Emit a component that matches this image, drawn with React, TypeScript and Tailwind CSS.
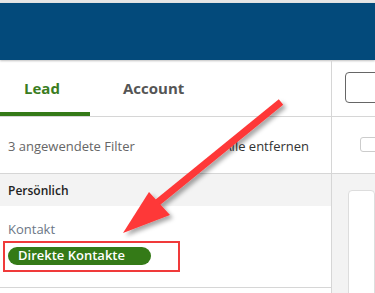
import React from 'react';

const App: React.FC = () => {
  return (
    <div className="relative w-[375px] h-[293px] overflow-hidden bg-white font-['Open_Sans','Noto_Sans',sans-serif]">
      <div className="h-[3px] bg-[#e6e6e6]"></div>
      <div className="h-[57px] bg-[#034a7b] shadow-[0_1px_2px_rgba(0,0,0,0.25)]"></div>

      {/* tabs */}
      <div className="grid grid-cols-[332px_1fr] h-[57px] border-b border-[#d6d6d6]">
        <div className="flex border-r border-[#d6d6d6]">
          <div className="w-[90px] flex flex-col">
            <div className="flex-1 flex items-center pt-[5px] pl-[24px] text-[15px] font-bold text-[#3a7d1e]">Lead</div>
            <div className="h-[4px] bg-[#347a17]"></div>
          </div>
          <div className="flex items-center pl-[33px] pt-[1px] text-[15px] font-bold text-[#555]">Account</div>
        </div>
        <div className="pl-[13px] pt-[12px]">
          <div className="w-[40px] h-[31px] border border-[#666] rounded-[4px]"></div>
        </div>
      </div>

      {/* filter row */}
      <div className="grid grid-cols-[332px_1fr] h-[57px] border-b border-[#d6d6d6]">
        <div className="flex items-center justify-between pt-[3px] pl-[8px] pr-[22px] border-r border-[#d6d6d6]">
          <span className="text-[13px] text-[#666]">3 angewendete Filter</span>
          <span className="text-[13px] text-[#333]">Alle entfernen</span>
        </div>
        <div className="pl-[28px] pt-[20px]">
          <div className="w-[20px] h-[15px] border border-[#ccc] rounded-[3px]"></div>
        </div>
      </div>

      <div className="grid grid-cols-[332px_1fr] h-[120px]">
        <div className="border-r border-[#d6d6d6] flex flex-col">
          <div className="h-[32px] bg-[#f3f3f3] flex items-center pt-[2px] pl-[8px] text-[12px] font-semibold text-[#222]">Persönlich</div>
          <div className="h-[82px] border-b border-[#d6d6d6] pl-[8px] pt-[14px]">
            <div className="text-[13px] text-[#6b7685] leading-[18px]">Kontakt</div>
            <div className="mt-[9px] w-[143px] h-[18px] rounded-full bg-[#347a17] flex items-center pl-[10px] text-[13px] font-semibold text-white">Direkte Kontakte</div>
          </div>
        </div>
        <div className="bg-[#f3f3f3] pl-[16px] pt-[16px]">
          <div className="h-[120px] bg-white border border-[#ddd] rounded-[4px]"></div>
        </div>
      </div>

      {/* annotations */}
      <div className="absolute left-[3px] top-[241px] w-[177px] h-[31px] border-2 border-[#f03a3a]"></div>
      <svg className="absolute inset-0 pointer-events-none" width="375" height="293" viewBox="0 0 375 293">
        <defs>
          <filter id="sh" x="-20%" y="-20%" width="140%" height="140%">
            <feDropShadow dx="3" dy="3" stdDeviation="2" floodColor="#000" floodOpacity="0.35" />
          </filter>
        </defs>
        <g filter="url(#sh)" fill="#fe3737" stroke="none">
          <line x1="281" y1="102" x2="152" y2="207" stroke="#fe3737" strokeWidth="7" />
          <polygon points="123,233 149,192 170,215" />
        </g>
      </svg>
    </div>
  );
};

export default App;
